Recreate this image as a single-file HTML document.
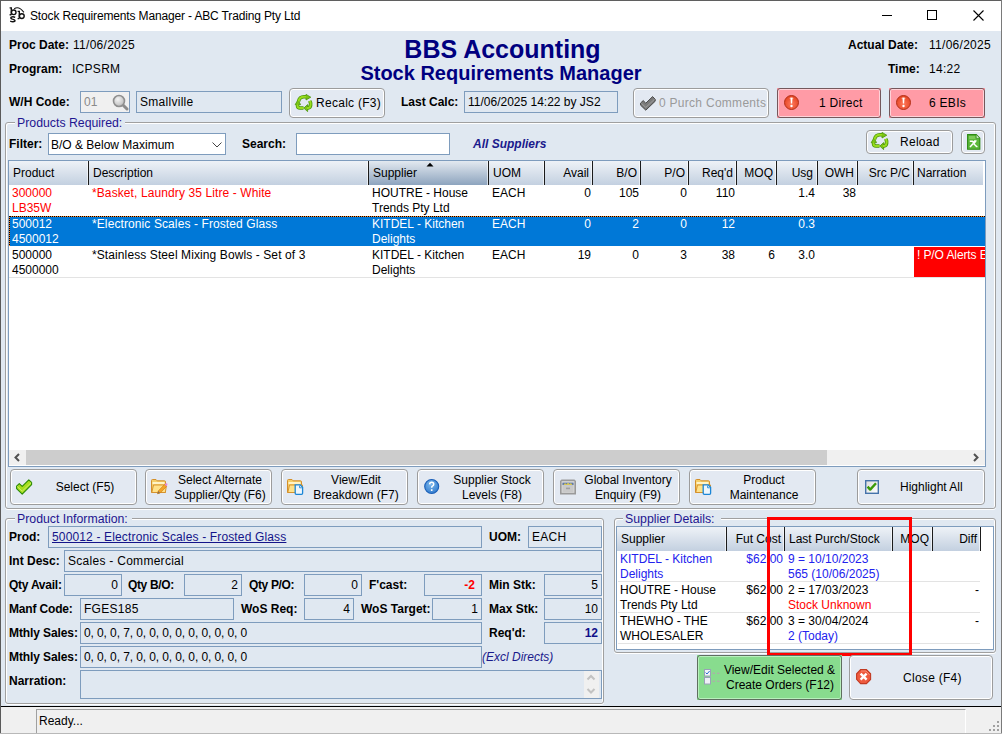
<!DOCTYPE html><html><head><meta charset="utf-8"><style>
*{box-sizing:border-box;margin:0;padding:0}
html,body{width:1002px;height:734px;overflow:hidden}
body{position:relative;background:#e0e8f1;font:12px/14px "Liberation Sans",sans-serif;color:#000}
.a{position:absolute}
.t{position:absolute;white-space:nowrap;line-height:14px}
.b{font-weight:700}
.btn{border:1px solid #9c9c9c;box-shadow:inset 0 0 0 1px #fff}
.grp{border:1px solid #a0a0a0;border-radius:3px;box-shadow:inset 1px 1px 0 #fff,inset -1px 0 0 #fff,0 1px 0 #fff}
.hd{position:absolute;top:161px;height:24px;background:linear-gradient(#eef2f7,#c3d0e0)}
.sep{position:absolute;width:1px;background:#1b1b1b}
svg{position:absolute;overflow:visible}
</style></head><body>
<div class="a" style="left:0px;top:0px;width:1002px;height:1px;background:#5f5f5f"></div>
<div class="a" style="left:0px;top:0px;width:1px;height:734px;background:#5a5a5a"></div>
<div class="a" style="left:1001px;top:0px;width:1px;height:734px;background:#7a7a7a"></div>
<div class="a" style="left:0px;top:733px;width:1002px;height:1px;background:#b8b8b8"></div>
<div class="a" style="left:1px;top:1px;width:1000px;height:30px;background:#fff"></div>
<svg style="left:0px;top:0px" width="30" height="30" viewBox="0 0 30 30"><g stroke="#111" fill="none" stroke-width="1.4"><path d="M9.6 7.9 H11.3 V14.8 M9.6 14.8 H11.3"/><circle cx="13.7" cy="12.3" r="2.3"/><path d="M15.2 17.4 Q13.2 16.4 11.3 17.1 Q9.9 18.2 12.3 19.1 Q15.6 19.8 14.9 21.1 Q13.2 22.3 10.2 21.1"/><path d="M17.6 11.4 H19.3 V18.6 M17.6 18.6 H19.3"/><circle cx="21.8" cy="16.1" r="2.4"/><path d="M14.2 8.8 Q18.8 5.6 23.9 12.3" stroke-width="1.1"/></g></svg>
<div class="t" style="left:30px;top:9px;letter-spacing:-0.15px;color:#000">Stock Requirements Manager - ABC Trading Pty Ltd</div>
<div class="a" style="left:882px;top:15px;width:10px;height:1px;background:#000"></div>
<div class="a" style="left:927px;top:10px;width:10px;height:10px;border:1px solid #000"></div>
<svg style="left:973px;top:10px" width="11" height="11" viewBox="0 0 11 11"><path d="M0.5 0.5L10.5 10.5M10.5 0.5L0.5 10.5" stroke="#000" stroke-width="1.1"/></svg>
<div class="t" style="left:9px;top:38px;font-weight:700">Proc Date:</div>
<div class="t" style="left:73px;top:38px;letter-spacing:0.28px">11/06/2025</div>
<div class="t" style="left:9px;top:62px;font-weight:700">Program:</div>
<div class="t" style="left:72px;top:62px;letter-spacing:0.28px">ICPSRM</div>
<div class="t" style="left:302.5px;top:35px;width:400px;text-align:center;font-size:25px;line-height:28px;font-weight:700;color:#000080">BBS Accounting</div>
<div class="t" style="left:301.0px;top:61px;width:400px;text-align:center;font-size:20px;line-height:24px;font-weight:700;color:#000080">Stock Requirements Manager</div>
<div class="t" style="left:848px;top:38px;font-weight:700">Actual Date:</div>
<div class="t" style="left:929px;top:38px;letter-spacing:0.28px">11/06/2025</div>
<div class="t" style="left:888px;top:62px;font-weight:700">Time:</div>
<div class="t" style="left:929px;top:62px;letter-spacing:0.28px">14:22</div>
<div class="t" style="left:9px;top:95px;font-weight:700">W/H Code:</div>
<div class="a" style="left:80px;top:91px;width:50px;height:22px;border:1px solid #7e9cbd;background:#f0f0f0"></div>
<div class="t" style="left:84px;top:95px;color:#8a8a8a">01</div>
<svg style="left:112px;top:94px" width="17" height="17" viewBox="0 0 17 17"><defs><radialGradient id="mg" cx="0.4" cy="0.35" r="0.7"><stop offset="0" stop-color="#f4f4f4"/><stop offset="1" stop-color="#b9b9b9"/></radialGradient></defs><path d="M10.5 10.5L15 15" stroke="#8c8c8c" stroke-width="3" stroke-linecap="round"/><circle cx="7" cy="7" r="5.5" fill="url(#mg)" stroke="#8f8f8f" stroke-width="1.6"/></svg>
<div class="a" style="left:136px;top:91px;width:146px;height:22px;border:1px solid #7e9cbd;background:#e0e8f1"></div>
<div class="t" style="left:140px;top:95px;letter-spacing:0.28px">Smallville</div>
<div class="a btn" style="left:289px;top:88px;width:96px;height:30px;background:#e3e9f2;border-color:#9c9c9c;border-radius:4px;box-shadow:inset 0 0 0 1px #fff"></div>
<svg style="left:296px;top:95px" width="16" height="17" viewBox="0 0 16 17"><g fill="none" stroke-linejoin="round"><path d="M2.5 6.5 Q3.5 1.8 8 1.8 L10.5 1.8 M13.8 5.8 L14.6 8 Q15 12.6 12.2 13 L11 13 M7.5 13 L4 13 Q1.5 13 1.5 10.5 L1.5 9.2" stroke="#4a9608" stroke-width="3.6"/><path d="M10 -0.6 L14.8 2.2 L10 5Z M11.6 9.6 L7.8 13.1 L11.6 16.6Z M-0.8 9.6 L1.9 5 L4.6 9.6Z" fill="#7ac414" stroke="#4a9608" stroke-width="0.8"/><path d="M2.5 6.5 Q3.5 1.8 8 1.8 L10.5 1.8 M13.8 5.8 L14.6 8 Q15 12.6 12.2 13 L11 13 M7.5 13 L4 13 Q1.5 13 1.5 10.5 L1.5 9.2" stroke="#98dc1e" stroke-width="2"/></g></svg>
<div class="t" style="left:316px;top:96px;letter-spacing:0.28px">Recalc (F3)</div>
<div class="t" style="left:401px;top:95px;font-weight:700">Last Calc:</div>
<div class="a" style="left:464px;top:91px;width:154px;height:22px;border:1px solid #7e9cbd;background:#e0e8f1"></div>
<div class="t" style="left:468px;top:95px;">11/06/2025 14:22 by JS2</div>
<div class="a btn" style="left:633px;top:88px;width:136px;height:30px;background:#e3e9f2;border-color:#9c9c9c;border-radius:4px;box-shadow:inset 0 0 0 1px #fff"></div>
<svg style="left:640px;top:96px" width="17" height="15" viewBox="0 0 17 15"><path d="M0.6 7 L3.2 4.6 L5.8 7.2 L12.6 0.6 L15.2 3.2 L15.2 5.2 L5.8 14.2 L0.6 9.2Z" fill="#7a7a7a" stroke="#4a4a4a" stroke-width="1" stroke-linejoin="round"/><path d="M1.4 7.3 L5.8 11.4 L14.6 3.2" stroke="#a8a8a8" stroke-width="0.8" fill="none"/></svg>
<div class="t" style="left:659px;top:96px;color:#9a9a9a;letter-spacing:0.28px">0 Purch Comments</div>
<div class="a" style="left:777px;top:88px;width:104px;height:30px;background:#ff9ba6"></div>
<div class="a btn" style="left:777px;top:88px;width:104px;height:30px;background:#ff9ba6;border-color:#74585c;border-radius:3px;box-shadow:inset 0 0 0 1px #ffd2d8"></div>
<div class="a" style="left:889px;top:88px;width:96px;height:30px;background:#ff9ba6"></div>
<div class="a btn" style="left:889px;top:88px;width:96px;height:30px;background:#ff9ba6;border-color:#74585c;border-radius:3px;box-shadow:inset 0 0 0 1px #ffd2d8"></div>
<svg style="left:784px;top:95px" width="16" height="16" viewBox="0 0 16 16"><defs><radialGradient id="rg" cx="0.5" cy="0.6" r="0.6"><stop offset="0" stop-color="#ff7a5c"/><stop offset="1" stop-color="#e2401f"/></radialGradient></defs><circle cx="7.5" cy="7.5" r="7" fill="url(#rg)" stroke="#b5321a" stroke-width="1"/><path d="M5.6 3.3 A5 5 0 0 1 9.4 3.3" stroke="#ffc0b0" stroke-width="0.8" fill="none"/><path d="M6.4 2.8 H8.6 L8.1 8.6 H6.9Z" fill="#fff"/><circle cx="7.5" cy="11" r="1.2" fill="#fff"/></svg>
<svg style="left:896px;top:95px" width="16" height="16" viewBox="0 0 16 16"><defs><radialGradient id="rg" cx="0.5" cy="0.6" r="0.6"><stop offset="0" stop-color="#ff7a5c"/><stop offset="1" stop-color="#e2401f"/></radialGradient></defs><circle cx="7.5" cy="7.5" r="7" fill="url(#rg)" stroke="#b5321a" stroke-width="1"/><path d="M5.6 3.3 A5 5 0 0 1 9.4 3.3" stroke="#ffc0b0" stroke-width="0.8" fill="none"/><path d="M6.4 2.8 H8.6 L8.1 8.6 H6.9Z" fill="#fff"/><circle cx="7.5" cy="11" r="1.2" fill="#fff"/></svg>
<div class="t" style="left:819px;top:96px;letter-spacing:0.28px">1 Direct</div>
<div class="t" style="left:929px;top:96px;letter-spacing:0.28px">6 EBIs</div>
<div class="a grp" style="left:5px;top:122px;width:991px;height:387px"></div>
<div class="a" style="left:15px;top:121px;width:110px;height:4px;background:#e0e8f1"></div>
<div class="t" style="left:17px;top:116px;color:#1f1690;font-size:12.3px">Products Required:</div>
<div class="t" style="left:9px;top:137px;font-weight:700">Filter:</div>
<div class="a" style="left:48px;top:133px;width:178px;height:22px;border:1px solid #7e9cbd;background:#fff"></div>
<div class="t" style="left:51px;top:138px;">B/O &amp; Below Maximum</div>
<svg style="left:212px;top:142px" width="10" height="6" viewBox="0 0 10 6"><path d="M0.5 0.5L5 5L9.5 0.5" stroke="#444" stroke-width="1" fill="none"/></svg>
<div class="t" style="left:242px;top:137px;font-weight:700">Search:</div>
<div class="a" style="left:296px;top:133px;width:154px;height:22px;border:1px solid #7e9cbd;background:#fff"></div>
<div class="t" style="left:473px;top:137px;font-weight:700;font-style:italic;color:#1a1a8c">All Suppliers</div>
<div class="a btn" style="left:866px;top:130px;width:87px;height:24px;background:#e3e9f2;border-color:#9c9c9c;border-radius:4px;box-shadow:inset 0 0 0 1px #fff"></div>
<svg style="left:872px;top:133px" width="16" height="17" viewBox="0 0 16 17"><g fill="none" stroke-linejoin="round"><path d="M2.5 6.5 Q3.5 1.8 8 1.8 L10.5 1.8 M13.8 5.8 L14.6 8 Q15 12.6 12.2 13 L11 13 M7.5 13 L4 13 Q1.5 13 1.5 10.5 L1.5 9.2" stroke="#4a9608" stroke-width="3.6"/><path d="M10 -0.6 L14.8 2.2 L10 5Z M11.6 9.6 L7.8 13.1 L11.6 16.6Z M-0.8 9.6 L1.9 5 L4.6 9.6Z" fill="#7ac414" stroke="#4a9608" stroke-width="0.8"/><path d="M2.5 6.5 Q3.5 1.8 8 1.8 L10.5 1.8 M13.8 5.8 L14.6 8 Q15 12.6 12.2 13 L11 13 M7.5 13 L4 13 Q1.5 13 1.5 10.5 L1.5 9.2" stroke="#98dc1e" stroke-width="2"/></g></svg>
<div class="t" style="left:900px;top:135px;letter-spacing:0.28px">Reload</div>
<div class="a btn" style="left:961px;top:130px;width:24px;height:24px;background:#e3e9f2;border-color:#9c9c9c;border-radius:4px;box-shadow:inset 0 0 0 1px #fff"></div>
<svg style="left:967px;top:134px" width="14" height="16" viewBox="0 0 14 16"><path d="M0.6 0.6 H9.2 L12.8 4.2 V15.2 H0.6Z" fill="#5cb83a" stroke="#2f8a14" stroke-width="1.1"/><path d="M2 2 H8.4 V5 H2Z" fill="#7fcb5a"/><path d="M9.2 0.6 V4.2 H12.8Z" fill="#fff" stroke="#2f8a14" stroke-width="0.8"/><path d="M2.8 7.2 H5.4 L7.2 9.2 L8.6 7.2 L7.6 7.2 L8.6 6.4 M3 13 L6.2 9.6 M6.8 9.8 L9.2 12.2 L10.4 12.8" stroke="#fff" stroke-width="1.5" fill="none"/></svg>
<div class="a" style="left:8px;top:160px;width:978px;height:307px;border:1px solid #7e9cbd;background:#fff"></div>
<div class="hd" style="left:9px;width:974px"></div>
<div class="hd" style="left:369px;width:119px;background:linear-gradient(#e3e9f0,#8da4be)"></div>
<div class="sep" style="left:88px;top:161px;height:24px"></div>
<div class="a" style="left:87px;top:161px;width:1px;height:24px;background:rgba(255,255,255,0.6)"></div>
<div class="sep" style="left:368px;top:161px;height:24px"></div>
<div class="a" style="left:367px;top:161px;width:1px;height:24px;background:rgba(255,255,255,0.6)"></div>
<div class="sep" style="left:488px;top:161px;height:24px"></div>
<div class="a" style="left:487px;top:161px;width:1px;height:24px;background:rgba(255,255,255,0.6)"></div>
<div class="sep" style="left:544px;top:161px;height:24px"></div>
<div class="a" style="left:543px;top:161px;width:1px;height:24px;background:rgba(255,255,255,0.6)"></div>
<div class="sep" style="left:592px;top:161px;height:24px"></div>
<div class="a" style="left:591px;top:161px;width:1px;height:24px;background:rgba(255,255,255,0.6)"></div>
<div class="sep" style="left:640px;top:161px;height:24px"></div>
<div class="a" style="left:639px;top:161px;width:1px;height:24px;background:rgba(255,255,255,0.6)"></div>
<div class="sep" style="left:688px;top:161px;height:24px"></div>
<div class="a" style="left:687px;top:161px;width:1px;height:24px;background:rgba(255,255,255,0.6)"></div>
<div class="sep" style="left:736px;top:161px;height:24px"></div>
<div class="a" style="left:735px;top:161px;width:1px;height:24px;background:rgba(255,255,255,0.6)"></div>
<div class="sep" style="left:776px;top:161px;height:24px"></div>
<div class="a" style="left:775px;top:161px;width:1px;height:24px;background:rgba(255,255,255,0.6)"></div>
<div class="sep" style="left:817px;top:161px;height:24px"></div>
<div class="a" style="left:816px;top:161px;width:1px;height:24px;background:rgba(255,255,255,0.6)"></div>
<div class="sep" style="left:857px;top:161px;height:24px"></div>
<div class="a" style="left:856px;top:161px;width:1px;height:24px;background:rgba(255,255,255,0.6)"></div>
<div class="sep" style="left:913px;top:161px;height:24px"></div>
<div class="a" style="left:912px;top:161px;width:1px;height:24px;background:rgba(255,255,255,0.6)"></div>
<svg style="left:426px;top:162px" width="8" height="5" viewBox="0 0 8 5"><path d="M0.5 4.5L4 0.8L7.5 4.5Z" fill="#000"/></svg>
<div class="t" style="left:13px;top:166px;">Product</div>
<div class="t" style="left:93px;top:166px;">Description</div>
<div class="t" style="left:373px;top:166px;">Supplier</div>
<div class="t" style="left:493px;top:166px;">UOM</div>
<div class="t" style="right:413px;top:166px;text-align:right;">Avail</div>
<div class="t" style="right:365px;top:166px;text-align:right;">B/O</div>
<div class="t" style="right:317px;top:166px;text-align:right;">P/O</div>
<div class="t" style="right:269px;top:166px;text-align:right;">Req'd</div>
<div class="t" style="right:229px;top:166px;text-align:right;">MOQ</div>
<div class="t" style="right:189px;top:166px;text-align:right;">Usg</div>
<div class="t" style="right:148px;top:166px;text-align:right;">OWH</div>
<div class="t" style="right:92px;top:166px;text-align:right;">Src P/C</div>
<div class="t" style="left:917px;top:166px;">Narration</div>
<div class="t" style="left:12px;top:186px;color:#ff0000">300000</div>
<div class="t" style="left:12px;top:201px;color:#ff0000">LB35W</div>
<div class="t" style="left:92px;top:186px;color:#ff0000;letter-spacing:0.1px">*Basket, Laundry 35 Litre - White</div>
<div class="t" style="left:372px;top:186px;color:#000">HOUTRE - House</div>
<div class="t" style="left:372px;top:201px;color:#000">Trends Pty Ltd</div>
<div class="t" style="left:492px;top:186px;color:#000">EACH</div>
<div class="t" style="right:411px;top:186px;text-align:right;color:#000">0</div>
<div class="t" style="right:363px;top:186px;text-align:right;color:#000">105</div>
<div class="t" style="right:315px;top:186px;text-align:right;color:#000">0</div>
<div class="t" style="right:267px;top:186px;text-align:right;color:#000">110</div>
<div class="t" style="right:187px;top:186px;text-align:right;color:#000">1.4</div>
<div class="t" style="right:146px;top:186px;text-align:right;color:#000">38</div>
<div class="a" style="left:9px;top:216px;width:976px;height:30px;background:#0078d7"></div>
<div class="a" style="left:9px;top:216px;width:976px;height:1px;background:repeating-linear-gradient(90deg,#ff8a28 0 1px,#000 1px 2px)"></div>
<div class="a" style="left:9px;top:216px;width:1px;height:30px;background:repeating-linear-gradient(180deg,#000 0 1px,#ff8a28 1px 2px)"></div>
<div class="t" style="left:12px;top:217px;color:#fff">500012</div>
<div class="t" style="left:12px;top:232px;color:#fff">4500012</div>
<div class="t" style="left:92px;top:217px;color:#fff;letter-spacing:0.1px">*Electronic Scales - Frosted Glass</div>
<div class="t" style="left:372px;top:217px;color:#fff">KITDEL - Kitchen</div>
<div class="t" style="left:372px;top:232px;color:#fff">Delights</div>
<div class="t" style="left:492px;top:217px;color:#fff">EACH</div>
<div class="t" style="right:411px;top:217px;text-align:right;color:#fff">0</div>
<div class="t" style="right:363px;top:217px;text-align:right;color:#fff">2</div>
<div class="t" style="right:315px;top:217px;text-align:right;color:#fff">0</div>
<div class="t" style="right:267px;top:217px;text-align:right;color:#fff">12</div>
<div class="t" style="right:187px;top:217px;text-align:right;color:#fff">0.3</div>
<div class="a" style="left:9px;top:277px;width:976px;height:1px;background:#e3e3e3"></div>
<div class="t" style="left:12px;top:248px;color:#000">500000</div>
<div class="t" style="left:12px;top:263px;color:#000">4500000</div>
<div class="t" style="left:92px;top:248px;color:#000;letter-spacing:0.1px">*Stainless Steel Mixing Bowls - Set of 3</div>
<div class="t" style="left:372px;top:248px;color:#000">KITDEL - Kitchen</div>
<div class="t" style="left:372px;top:263px;color:#000">Delights</div>
<div class="t" style="left:492px;top:248px;color:#000">EACH</div>
<div class="t" style="right:411px;top:248px;text-align:right;color:#000">19</div>
<div class="t" style="right:363px;top:248px;text-align:right;color:#000">0</div>
<div class="t" style="right:315px;top:248px;text-align:right;color:#000">3</div>
<div class="t" style="right:267px;top:248px;text-align:right;color:#000">38</div>
<div class="t" style="right:227px;top:248px;text-align:right;color:#000">6</div>
<div class="t" style="right:187px;top:248px;text-align:right;color:#000">3.0</div>
<div class="a" style="left:914px;top:247px;width:71px;height:30px;background:#ff0000"></div>
<div class="a" style="left:914px;top:247px;width:71px;height:30px;overflow:hidden"><div class="t" style="left:3px;top:1px;color:#fff;letter-spacing:-0.1px">! P/O Alerts Exist</div></div>
<div class="a" style="left:9px;top:450px;width:976px;height:15px;background:#f0f0f0"></div>
<div class="a" style="left:26px;top:450px;width:801px;height:15px;background:#cdcdcd"></div>
<svg style="left:13px;top:453px" width="8" height="9" viewBox="0 0 8 9"><path d="M6 1L2.5 4.5L6 8" stroke="#505050" stroke-width="2" fill="none"/></svg>
<svg style="left:972px;top:453px" width="8" height="9" viewBox="0 0 8 9"><path d="M2 1L5.5 4.5L2 8" stroke="#505050" stroke-width="2" fill="none"/></svg>
<div class="a btn" style="left:10px;top:469px;width:127px;height:36px;background:#e3e9f2;border-color:#9c9c9c;border-radius:4px;box-shadow:inset 0 0 0 1px #fff"></div>
<svg style="left:16px;top:479px" width="17" height="16" viewBox="0 0 17 16"><path d="M0.6 7.2 L3.3 4.6 L6.2 7.3 L12.8 0.8 L15.6 3.4 L15.6 5.6 L6.2 15.2 L0.6 9.6Z" fill="#a6de1e" stroke="#2b8a06" stroke-width="1.1" stroke-linejoin="round"/><path d="M1.2 7.4 L6.2 12.2 L15.2 3.6" stroke="#d8f27a" stroke-width="0.8" fill="none"/></svg>
<div class="t" style="left:-15.0px;top:480px;width:200px;text-align:center;">Select (F5)</div>
<div class="a btn" style="left:145px;top:469px;width:127px;height:36px;background:#e3e9f2;border-color:#9c9c9c;border-radius:4px;box-shadow:inset 0 0 0 1px #fff"></div>
<svg style="left:151px;top:479px" width="17" height="16" viewBox="0 0 17 16"><path d="M0.5 1.5 Q0.5 0.5 1.5 0.5 H5 L6.2 1.8 H13.5 Q14.5 1.8 14.5 2.8 V13.5 H0.5Z" fill="#f5cf6a" stroke="#d48f2a" stroke-width="1"/><path d="M1.5 3 H13.5 V5 H1.5Z" fill="#fff4c8"/><path d="M2.5 6 H15.6 L14.3 13.5 H0.8Z" fill="#ffe28a" stroke="#d48f2a" stroke-width="0.9"/><path d="M6.5 14.8 L7.2 12 L13.6 5.4 L15.6 7.4 L9.2 14Z" fill="#f4a428" stroke="#c77a10" stroke-width="0.6"/><path d="M13.6 5.4 L14.6 4.4 Q15.4 3.8 16.2 4.6 Q16.8 5.4 16.2 6 L15.6 7.4Z" fill="#e58ad8"/><path d="M6.5 14.8 L7.2 12 L9.2 14Z" fill="#8a7050"/></svg>
<div class="t" style="left:120.0px;top:473px;width:200px;text-align:center;">Select Alternate</div>
<div class="t" style="left:120.0px;top:488px;width:200px;text-align:center;">Supplier/Qty (F6)</div>
<div class="a btn" style="left:281px;top:469px;width:127px;height:36px;background:#e3e9f2;border-color:#9c9c9c;border-radius:4px;box-shadow:inset 0 0 0 1px #fff"></div>
<svg style="left:287px;top:479px" width="17" height="16" viewBox="0 0 17 16"><path d="M0.5 1.5 Q0.5 0.5 1.5 0.5 H5 L6.2 1.8 H13.5 Q14.5 1.8 14.5 2.8 V13.5 H0.5Z" fill="#f5cf6a" stroke="#d48f2a" stroke-width="1"/><path d="M1.5 3 H13.5 V5 H1.5Z" fill="#fff4c8"/><path d="M2.5 6 H15.6 L14.3 13.5 H0.8Z" fill="#ffe28a" stroke="#d48f2a" stroke-width="0.9"/><path d="M8.2 5.8 H13.2 L15.6 8.2 V14.2 Q15.6 15.3 14.5 15.3 H9.3 Q8.2 15.3 8.2 14.2Z" fill="#eef6fc" stroke="#1b86d6" stroke-width="1.3"/><path d="M12.6 6.6 V8.8 H14.8" fill="none" stroke="#1b86d6" stroke-width="0.9"/></svg>
<div class="t" style="left:256.0px;top:473px;width:200px;text-align:center;">View/Edit</div>
<div class="t" style="left:256.0px;top:488px;width:200px;text-align:center;">Breakdown (F7)</div>
<div class="a btn" style="left:417px;top:469px;width:127px;height:36px;background:#e3e9f2;border-color:#9c9c9c;border-radius:4px;box-shadow:inset 0 0 0 1px #fff"></div>
<svg style="left:424px;top:479px" width="16" height="16" viewBox="0 0 16 16"><defs><radialGradient id="hg" cx="0.45" cy="0.35" r="0.7"><stop offset="0" stop-color="#7db8ec"/><stop offset="1" stop-color="#2d78cc"/></radialGradient></defs><circle cx="7.7" cy="7.5" r="7" fill="url(#hg)" stroke="#1b5fb8" stroke-width="1.1"/><path d="M5.6 5.4 Q5.8 3.3 7.7 3.3 Q9.7 3.3 9.7 5.2 Q9.7 6.4 8.4 7.1 Q7.7 7.5 7.7 8.7" stroke="#fff" stroke-width="1.5" fill="none"/><rect x="6.9" y="10.2" width="1.6" height="1.8" fill="#fff"/></svg>
<div class="t" style="left:392.0px;top:473px;width:200px;text-align:center;">Supplier Stock</div>
<div class="t" style="left:392.0px;top:488px;width:200px;text-align:center;">Levels (F8)</div>
<div class="a btn" style="left:553px;top:469px;width:127px;height:36px;background:#e3e9f2;border-color:#9c9c9c;border-radius:4px;box-shadow:inset 0 0 0 1px #fff"></div>
<svg style="left:560px;top:479px" width="17" height="17" viewBox="0 0 17 17"><path d="M1.5 0.5 H14.5 L16 2 V15.5 H0 V2Z" fill="#9a9a9a"/><rect x="1.6" y="2.2" width="12.8" height="11.6" fill="#dedede"/><rect x="2.4" y="3.6" width="11.2" height="2.6" fill="#5f78a8"/><path d="M3.5 5.8 L5 4.2 L6.5 5.2 L8 4 L9.5 5 L11 4.2 L12.5 5.8Z" fill="#ffe03a"/><rect x="2.4" y="6.8" width="11.2" height="6.4" fill="#c9c9c9"/><rect x="6" y="8.6" width="4" height="1.6" fill="#a0a0a0"/></svg>
<div class="t" style="left:528.0px;top:473px;width:200px;text-align:center;">Global Inventory</div>
<div class="t" style="left:528.0px;top:488px;width:200px;text-align:center;">Enquiry (F9)</div>
<div class="a btn" style="left:689px;top:469px;width:127px;height:36px;background:#e3e9f2;border-color:#9c9c9c;border-radius:4px;box-shadow:inset 0 0 0 1px #fff"></div>
<svg style="left:695px;top:479px" width="17" height="16" viewBox="0 0 17 16"><path d="M0.5 1.5 Q0.5 0.5 1.5 0.5 H5 L6.2 1.8 H13.5 Q14.5 1.8 14.5 2.8 V13.5 H0.5Z" fill="#f5cf6a" stroke="#d48f2a" stroke-width="1"/><path d="M1.5 3 H13.5 V5 H1.5Z" fill="#fff4c8"/><path d="M2.5 6 H15.6 L14.3 13.5 H0.8Z" fill="#ffe28a" stroke="#d48f2a" stroke-width="0.9"/><path d="M8.2 5.8 H13.2 L15.6 8.2 V14.2 Q15.6 15.3 14.5 15.3 H9.3 Q8.2 15.3 8.2 14.2Z" fill="#eef6fc" stroke="#1b86d6" stroke-width="1.3"/><path d="M12.6 6.6 V8.8 H14.8" fill="none" stroke="#1b86d6" stroke-width="0.9"/></svg>
<div class="t" style="left:664.0px;top:473px;width:200px;text-align:center;">Product</div>
<div class="t" style="left:664.0px;top:488px;width:200px;text-align:center;">Maintenance</div>
<div class="a btn" style="left:857px;top:469px;width:128px;height:36px;background:#e3e9f2;border-color:#9c9c9c;border-radius:4px;box-shadow:inset 0 0 0 1px #fff"></div>
<svg style="left:865px;top:480px" width="14" height="14" viewBox="0 0 14 14"><defs><linearGradient id="cbg" x1="0" y1="0" x2="1" y2="1"><stop offset="0" stop-color="#dcdcdc"/><stop offset="1" stop-color="#ffffff"/></linearGradient></defs><rect x="0.7" y="0.7" width="12.6" height="12.6" fill="url(#cbg)" stroke="#4573aa" stroke-width="1.4"/><path d="M2.6 6.6 L5.2 9.6 L11 3.2" stroke="#3a9a0a" stroke-width="2.4" fill="none" stroke-linejoin="round"/></svg>
<div class="t" style="left:900px;top:480px;">Highlight All</div>
<div class="a grp" style="left:5px;top:518px;width:599px;height:186px"></div>
<div class="a" style="left:15px;top:517px;width:117px;height:4px;background:#e0e8f1"></div>
<div class="t" style="left:17px;top:512px;color:#1f1690;font-size:12.3px">Product Information:</div>
<div class="t" style="left:9px;top:530px;font-weight:700;letter-spacing:0px">Prod:</div>
<div class="a" style="left:48px;top:526px;width:434px;height:22px;border:1px solid #7e9cbd;background:#e0e8f1"></div>
<div class="t" style="left:52px;top:530px;color:#14148a;text-decoration:underline;letter-spacing:0.15px">500012 - Electronic Scales - Frosted Glass</div>
<div class="t" style="left:489px;top:530px;font-weight:700;letter-spacing:0px">UOM:</div>
<div class="a" style="left:528px;top:526px;width:74px;height:22px;border:1px solid #7e9cbd;background:#e0e8f1"></div>
<div class="t" style="left:532px;top:530px;letter-spacing:0.28px">EACH</div>
<div class="t" style="left:9px;top:554px;font-weight:700;letter-spacing:0px">Int Desc:</div>
<div class="a" style="left:64px;top:550px;width:538px;height:22px;border:1px solid #7e9cbd;background:#e0e8f1"></div>
<div class="t" style="left:68px;top:554px;letter-spacing:0.28px">Scales - Commercial</div>
<div class="t" style="left:9px;top:578px;font-weight:700;letter-spacing:-0.25px">Qty Avail:</div>
<div class="a" style="left:64px;top:574px;width:58px;height:22px;border:1px solid #7e9cbd;background:#e0e8f1"></div>
<div class="t" style="right:884px;top:578px;text-align:right;">0</div>
<div class="t" style="left:128px;top:578px;font-weight:700;letter-spacing:-0.36px">Qty B/O:</div>
<div class="a" style="left:184px;top:574px;width:58px;height:22px;border:1px solid #7e9cbd;background:#e0e8f1"></div>
<div class="t" style="right:764px;top:578px;text-align:right;">2</div>
<div class="t" style="left:249px;top:578px;font-weight:700;letter-spacing:-0.36px">Qty P/O:</div>
<div class="a" style="left:304px;top:574px;width:58px;height:22px;border:1px solid #7e9cbd;background:#e0e8f1"></div>
<div class="t" style="right:644px;top:578px;text-align:right;">0</div>
<div class="t" style="left:369px;top:578px;font-weight:700;letter-spacing:0px">F'cast:</div>
<div class="a" style="left:424px;top:574px;width:58px;height:22px;border:1px solid #7e9cbd;background:#e0e8f1"></div>
<div class="t" style="right:527px;top:578px;text-align:right;color:#ff0000;font-weight:700">-2</div>
<div class="t" style="left:489px;top:578px;font-weight:700;letter-spacing:0px">Min Stk:</div>
<div class="a" style="left:544px;top:574px;width:58px;height:22px;border:1px solid #7e9cbd;background:#e0e8f1"></div>
<div class="t" style="right:404px;top:578px;text-align:right;">5</div>
<div class="t" style="left:9px;top:602px;font-weight:700;letter-spacing:-0.17px">Manf Code:</div>
<div class="a" style="left:80px;top:598px;width:154px;height:22px;border:1px solid #7e9cbd;background:#e0e8f1"></div>
<div class="t" style="left:84px;top:602px;letter-spacing:0.28px">FGES185</div>
<div class="t" style="left:241px;top:602px;font-weight:700;letter-spacing:0px">WoS Req:</div>
<div class="a" style="left:304px;top:598px;width:50px;height:22px;border:1px solid #7e9cbd;background:#e0e8f1"></div>
<div class="t" style="right:652px;top:602px;text-align:right;">4</div>
<div class="t" style="left:361px;top:602px;font-weight:700;letter-spacing:0px">WoS Target:</div>
<div class="a" style="left:432px;top:598px;width:50px;height:22px;border:1px solid #7e9cbd;background:#e0e8f1"></div>
<div class="t" style="right:524px;top:602px;text-align:right;">1</div>
<div class="t" style="left:489px;top:602px;font-weight:700;letter-spacing:0px">Max Stk:</div>
<div class="a" style="left:544px;top:598px;width:58px;height:22px;border:1px solid #7e9cbd;background:#e0e8f1"></div>
<div class="t" style="right:404px;top:602px;text-align:right;">10</div>
<div class="t" style="left:9px;top:626px;font-weight:700;letter-spacing:-0.1px">Mthly Sales:</div>
<div class="a" style="left:80px;top:622px;width:402px;height:22px;border:1px solid #7e9cbd;background:#e0e8f1"></div>
<div class="t" style="left:84px;top:626px;letter-spacing:-0.1px">0, 0, 0, 7, 0, 0, 0, 0, 0, 0, 0, 0, 0</div>
<div class="t" style="left:489px;top:626px;font-weight:700;letter-spacing:0px">Req'd:</div>
<div class="a" style="left:544px;top:622px;width:58px;height:22px;border:1px solid #7e9cbd;background:#e0e8f1"></div>
<div class="t" style="right:404px;top:626px;text-align:right;color:#10108a;font-weight:700">12</div>
<div class="t" style="left:9px;top:650px;font-weight:700;letter-spacing:-0.1px">Mthly Sales:</div>
<div class="a" style="left:80px;top:646px;width:402px;height:22px;border:1px solid #7e9cbd;background:#e0e8f1"></div>
<div class="t" style="left:84px;top:650px;letter-spacing:-0.1px">0, 0, 0, 7, 0, 0, 0, 0, 0, 0, 0, 0, 0</div>
<div class="t" style="left:482px;top:650px;font-style:italic;color:#1a1a8c">(Excl Directs)</div>
<div class="t" style="left:9px;top:674px;font-weight:700;letter-spacing:0px">Narration:</div>
<div class="a" style="left:80px;top:670px;width:522px;height:29px;border:1px solid #7e9cbd;background:#e0e8f1"></div>
<div class="a" style="left:584px;top:671px;width:15px;height:27px;background:#f0f0f0"></div>
<svg style="left:586px;top:673px" width="10" height="23" viewBox="0 0 10 23"><path d="M1.5 6.5L5 3L8.5 6.5M1.5 16L5 19.5L8.5 16" stroke="#c2c2c2" stroke-width="2" fill="none"/></svg>
<div class="a grp" style="left:614px;top:518px;width:382px;height:135px"></div>
<div class="a" style="left:623px;top:517px;width:98px;height:4px;background:#e0e8f1"></div>
<div class="t" style="left:625px;top:512px;color:#1f1690;font-size:12.3px">Supplier Details:</div>
<div class="a" style="left:616px;top:526px;width:378px;height:124px;border:1px solid #7e9cbd;background:#fff"></div>
<div class="a" style="left:617px;top:527px;width:363px;height:24px;background:linear-gradient(#eef2f7,#c3d0e0)"></div>
<div class="sep" style="left:726px;top:527px;height:24px"></div>
<div class="a" style="left:725px;top:527px;width:1px;height:24px;background:rgba(255,255,255,0.6)"></div>
<div class="sep" style="left:784px;top:527px;height:24px"></div>
<div class="a" style="left:783px;top:527px;width:1px;height:24px;background:rgba(255,255,255,0.6)"></div>
<div class="sep" style="left:892px;top:527px;height:24px"></div>
<div class="a" style="left:891px;top:527px;width:1px;height:24px;background:rgba(255,255,255,0.6)"></div>
<div class="sep" style="left:932px;top:527px;height:24px"></div>
<div class="a" style="left:931px;top:527px;width:1px;height:24px;background:rgba(255,255,255,0.6)"></div>
<div class="sep" style="left:980px;top:527px;height:24px"></div>
<div class="a" style="left:979px;top:527px;width:1px;height:24px;background:rgba(255,255,255,0.6)"></div>
<div class="t" style="left:621px;top:532px;">Supplier</div>
<div class="t" style="right:221px;top:532px;text-align:right;">Fut Cost</div>
<div class="t" style="left:789px;top:532px;">Last Purch/Stock</div>
<div class="t" style="right:73px;top:532px;text-align:right;">MOQ</div>
<div class="t" style="right:25px;top:532px;text-align:right;">Diff</div>
<div class="a" style="left:618px;top:581px;width:362px;height:1px;background:#e3e3e3"></div>
<div class="t" style="left:620px;top:552px;color:#2222ee">KITDEL - Kitchen</div>
<div class="t" style="left:620px;top:567px;color:#2222ee">Delights</div>
<div class="t" style="right:219px;top:552px;text-align:right;color:#2222ee">$62.00</div>
<div class="t" style="left:788px;top:552px;color:#2222ee">9 = 10/10/2023</div>
<div class="t" style="left:788px;top:567px;color:#2222ee">565 (10/06/2025)</div>
<div class="a" style="left:618px;top:612px;width:362px;height:1px;background:#e3e3e3"></div>
<div class="t" style="left:620px;top:583px;color:#000">HOUTRE - House</div>
<div class="t" style="left:620px;top:598px;color:#000">Trends Pty Ltd</div>
<div class="t" style="right:219px;top:583px;text-align:right;color:#000">$62.00</div>
<div class="t" style="left:788px;top:583px;color:#000">2 = 17/03/2023</div>
<div class="t" style="left:788px;top:598px;color:#ff0000">Stock Unknown</div>
<div class="t" style="right:23px;top:583px;text-align:right;">-</div>
<div class="a" style="left:618px;top:643px;width:362px;height:1px;background:#e3e3e3"></div>
<div class="t" style="left:620px;top:614px;color:#000">THEWHO - THE</div>
<div class="t" style="left:620px;top:629px;color:#000">WHOLESALER</div>
<div class="t" style="right:219px;top:614px;text-align:right;color:#000">$62.00</div>
<div class="t" style="left:788px;top:614px;color:#000">3 = 30/04/2024</div>
<div class="t" style="left:788px;top:629px;color:#2222ee">2 (Today)</div>
<div class="t" style="right:23px;top:614px;text-align:right;">-</div>
<div class="a" style="left:767px;top:517px;width:145px;height:139px;border:3px solid #ff0000"></div>
<div class="a" style="left:697px;top:655px;width:145px;height:45px;background:#88dc8e"></div>
<div class="a btn" style="left:697px;top:655px;width:145px;height:45px;background:#88dc8e;border-color:#5f6e60;border-radius:3px;box-shadow:inset 0 0 0 1px #b8f0bc"></div>
<svg style="left:704px;top:669px" width="18" height="17" viewBox="0 0 18 17"><rect x="0.5" y="0.5" width="6" height="6.5" fill="#f2f4f8" stroke="#9aa0b8" stroke-width="1"/><path d="M1.6 3.6 L3 5 L5.6 2" stroke="#2a6ad0" stroke-width="1" fill="none"/><rect x="0.5" y="8.5" width="6" height="6.5" fill="#eef0f6" stroke="#9aa0b8" stroke-width="1"/><path d="M8.5 4.2 H11 M13 4.2 H15.5 M8.5 12.2 H11 M13 12.2 H15.5" stroke="#b8a0b0" stroke-width="1"/></svg>
<div class="t" style="left:699.5px;top:663px;width:160px;text-align:center;">View/Edit Selected &amp;</div>
<div class="t" style="left:700.0px;top:678px;width:160px;text-align:center;">Create Orders (F12)</div>
<div class="a btn" style="left:849px;top:655px;width:144px;height:45px;background:#e3e9f2;border-color:#9c9c9c;border-radius:4px;box-shadow:inset 0 0 0 1px #fff"></div>
<svg style="left:856px;top:669px" width="16" height="16" viewBox="0 0 16 16"><path d="M4.6 0.6 H10.4 L14.6 4.8 V10.4 L10.4 14.6 H4.6 L0.6 10.4 V4.8Z" fill="#ee5a3e" stroke="#c23a22" stroke-width="1.1"/><path d="M5 2 H10 L13.2 5.2 V6" stroke="#ffa08a" stroke-width="0.7" fill="none"/><path d="M4.6 4.6 L10.6 10.6 M10.6 4.6 L4.6 10.6" stroke="#fff" stroke-width="2.4"/></svg>
<div class="t" style="left:903px;top:671px;letter-spacing:0.28px">Close (F4)</div>
<div class="a" style="left:1px;top:706px;width:1000px;height:1px;background:#000"></div>
<div class="a" style="left:1px;top:707px;width:1000px;height:26px;background:#f0f0f0"></div>
<div class="a" style="left:36px;top:709px;width:930px;height:24px;border-top:1px solid #a0a0a0;border-left:1px solid #a0a0a0;border-right:1px solid #fff"></div>
<div class="t" style="left:39px;top:714px;">Ready...</div>
<div class="a" style="left:997px;top:721px;width:2px;height:2px;background:#a0a0a0"></div>
<div class="a" style="left:993px;top:725px;width:2px;height:2px;background:#a0a0a0"></div>
<div class="a" style="left:997px;top:725px;width:2px;height:2px;background:#a0a0a0"></div>
<div class="a" style="left:989px;top:729px;width:2px;height:2px;background:#a0a0a0"></div>
<div class="a" style="left:993px;top:729px;width:2px;height:2px;background:#a0a0a0"></div>
<div class="a" style="left:997px;top:729px;width:2px;height:2px;background:#a0a0a0"></div>
</body></html>
